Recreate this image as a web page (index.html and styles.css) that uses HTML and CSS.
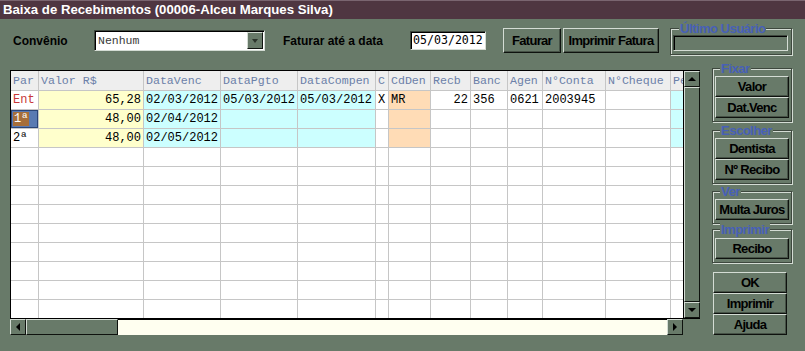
FILE: index.html
```html
<!DOCTYPE html>
<html lang="pt-BR">
<head>
  <meta charset="UTF-8">
  <title>Baixa de Recebimentos</title>
  <link rel="stylesheet" href="styles.css">
</head>
<body>
  <div class="titlebar">Baixa de Recebimentos (00006-Alceu Marques Silva)</div>

  <div class="toolbar">
    <span class="lbl lbl-conv">Convênio</span>
    <div class="combo">
      <span class="combo-text">Nenhum</span>
      <span class="combo-btn"><i class="tri tri-down"></i></span>
    </div>
    <span class="lbl lbl-data">Faturar até a data</span>
    <div class="field date">05/03/2012</div>
    <button class="btn btn-faturar">Faturar</button>
    <button class="btn btn-fatura">Imprimir Fatura</button>
    <div class="group group-user">
      <div class="group-title">Último Usuário</div>
      <div class="field user"></div>
    </div>
  </div>

  <div class="main">
    <div class="gridbox">
      <div class="sheet">
        <table>
          <colgroup>
            <col class="w-par"><col class="w-valor"><col class="w-data"><col class="w-data">
            <col class="w-comp"><col class="w-c"><col class="w-den"><col class="w-recb">
            <col class="w-banc"><col class="w-agen"><col class="w-conta"><col class="w-cheque"><col class="w-pe">
          </colgroup>
          <thead>
            <tr>
              <th>Par</th><th>Valor R$</th><th>DataVenc</th><th>DataPgto</th><th>DataCompen</th>
              <th>C</th><th>CdDen</th><th>Recb</th><th>Banc</th><th>Agen</th><th>N°Conta</th><th>N°Cheque</th><th>Pe</th>
            </tr>
          </thead>
          <tbody>
            <tr>
              <td class="red">Ent</td><td class="y num">65,28</td><td class="c">02/03/2012</td><td class="c">05/03/2012</td><td class="c">05/03/2012</td>
              <td>X</td><td class="p">MR</td><td class="num">22</td><td>356</td><td>0621</td><td>2003945</td><td></td><td class="c"></td>
            </tr>
            <tr>
              <td class="sel"><span class="mark">1ª</span></td><td class="y num">48,00</td><td class="c">02/04/2012</td><td class="c"></td><td class="c"></td>
              <td></td><td class="p"></td><td></td><td></td><td></td><td></td><td></td><td class="c"></td>
            </tr>
            <tr>
              <td>2ª</td><td class="y num">48,00</td><td class="c">02/05/2012</td><td class="c"></td><td class="c"></td>
              <td></td><td class="p"></td><td></td><td></td><td></td><td></td><td></td><td class="c"></td>
            </tr>
            <tr><td></td><td></td><td></td><td></td><td></td><td></td><td></td><td></td><td></td><td></td><td></td><td></td><td></td></tr>
            <tr><td></td><td></td><td></td><td></td><td></td><td></td><td></td><td></td><td></td><td></td><td></td><td></td><td></td></tr>
            <tr><td></td><td></td><td></td><td></td><td></td><td></td><td></td><td></td><td></td><td></td><td></td><td></td><td></td></tr>
            <tr><td></td><td></td><td></td><td></td><td></td><td></td><td></td><td></td><td></td><td></td><td></td><td></td><td></td></tr>
            <tr><td></td><td></td><td></td><td></td><td></td><td></td><td></td><td></td><td></td><td></td><td></td><td></td><td></td></tr>
            <tr><td></td><td></td><td></td><td></td><td></td><td></td><td></td><td></td><td></td><td></td><td></td><td></td><td></td></tr>
            <tr><td></td><td></td><td></td><td></td><td></td><td></td><td></td><td></td><td></td><td></td><td></td><td></td><td></td></tr>
            <tr><td></td><td></td><td></td><td></td><td></td><td></td><td></td><td></td><td></td><td></td><td></td><td></td><td></td></tr>
            <tr><td></td><td></td><td></td><td></td><td></td><td></td><td></td><td></td><td></td><td></td><td></td><td></td><td></td></tr>
          </tbody>
        </table>
      </div>
      <div class="vscroll">
        <span class="sb-arrow"><i class="tri tri-up"></i></span>
        <span class="sb-thumb"></span>
        <span class="sb-arrow"><i class="tri tri-down"></i></span>
      </div>
      <div class="hscroll">
        <span class="sb-arrow"><i class="tri tri-left"></i></span>
        <span class="sb-thumb h-thumb"></span>
        <span class="sb-track"></span>
        <span class="sb-arrow"><i class="tri tri-right"></i></span>
      </div>
      <div class="corner"></div>
    </div>

    <div class="side">
      <div class="group">
        <div class="group-title">Fixar</div>
        <button class="btn side-btn">Valor</button>
        <button class="btn side-btn">Dat.Venc</button>
      </div>
      <div class="group">
        <div class="group-title">Escolher</div>
        <button class="btn side-btn">Dentista</button>
        <button class="btn side-btn">Nº Recibo</button>
      </div>
      <div class="group">
        <div class="group-title">Ver</div>
        <button class="btn side-btn">Multa Juros</button>
      </div>
      <div class="group group-last">
        <div class="group-title">Imprimir</div>
        <button class="btn side-btn">Recibo</button>
      </div>
      <div class="actions">
        <button class="btn side-btn">OK</button>
        <button class="btn side-btn">Imprimir</button>
        <button class="btn side-btn">Ajuda</button>
      </div>
    </div>
  </div>
</body>
</html>
```

FILE: styles.css
```css
:root {
  --bg: #687a69;
  --hi: #d4dcd4;
  --lo: #3e483e;
}
* { box-sizing: border-box; }
body {
  margin: 0;
  width: 805px;
  height: 351px;
  overflow: hidden;
  background: var(--bg);
  font-family: "Liberation Sans", Arial, sans-serif;
  color: #000;
}

/* barra de titulo */
.titlebar {
  height: 19px;
  border-top: 1px solid #7a6570;
  background: #4f3641;
  color: #fff;
  font-weight: bold;
  font-size: 13.2px;
  line-height: 17px;
  padding-left: 3px;
  white-space: nowrap;
}

/* linha de cima */
.toolbar { display: flex; align-items: center; height: 43px; padding-left: 13px; }
.lbl { font-weight: bold; font-size: 12px; white-space: nowrap; }
.lbl-conv { width: 81px; }
.lbl-data { width: 127px; margin-left: 18px; }
.combo {
  display: flex;
  width: 171px;
  height: 21px;
  background: #fff;
  border: 1px solid;
  border-color: var(--lo) var(--hi) var(--hi) var(--lo);
  box-shadow: inset 1px 1px 0 #000;
}
.combo-text { flex: 1; padding: 3px 0 0 3px; font: 11.5px "Liberation Mono", monospace; color: #3a3a3a; }
.combo-btn {
  width: 16px;
  margin: 1px 1px 1px 0;
  display: flex; align-items: center; justify-content: center;
  background: var(--bg);
  border: 1px solid;
  border-color: var(--hi) #101410 #101410 var(--hi);
}
.field {
  border: 1px solid;
  border-color: var(--lo) var(--hi) var(--hi) var(--lo);
  box-shadow: inset 1px 1px 0 #000;
}
.date {
  width: 76px;
  height: 19px;
  background: #fff;
  font: 11.6px "DejaVu Sans Mono", monospace;
  line-height: 17px;
  padding-left: 2px;
  white-space: nowrap;
}
.btn {
  background: var(--bg);
  border: 1px solid;
  border-color: var(--hi) #0e120e #0e120e var(--hi);
  box-shadow: inset -1px -1px 0 #465246;
  font-family: "Liberation Sans", Arial, sans-serif;
  font-weight: bold;
  font-size: 13px;
  letter-spacing: -0.7px;
  color: #000;
  padding: 0;
  white-space: nowrap;
}
.btn-faturar { width: 58px; height: 25px; margin-left: 17px; }
.btn-fatura { width: 96px; height: 25px; margin-left: 2px; }

/* molduras de grupo */
.group {
  display: flex;
  flex-direction: column;
  margin-top: 7px;
  padding: 0 3px 3px 1px;
  border: 1px solid var(--lo);
  box-shadow: inset 1px 1px 0 var(--hi), 1px 1px 0 var(--hi);
}
.group-title {
  width: fit-content;
  margin: -7px 0 1px 6px;
  padding: 0 1px;
  background: var(--bg);
  font-weight: bold;
  font-size: 13px;
  letter-spacing: -0.5px;
  line-height: 13px;
  color: #4760b8;
  white-space: nowrap;
}
.group-user { width: 122px; margin: 9px 0 0 11px; padding: 0 3px 3px 2px; align-self: flex-start; }
.group-user .group-title { margin-bottom: 0; }
.user { height: 16px; }

/* area principal */
.main { display: flex; align-items: flex-start; }
.gridbox {
  display: grid;
  grid-template-columns: 673px 17px;
  grid-template-rows: 249px 16px;
  margin: 8px 0 0 10px;
}
.sheet {
  overflow: hidden;
  background: #fff;
  border: 1px solid #000;
  border-right: none;
}
.sheet table {
  border-collapse: separate;
  border-spacing: 0;
  table-layout: fixed;
  width: 690px;
  font: 12px "Liberation Mono", monospace;
}
.w-par { width: 28px; }
.w-valor { width: 105px; }
.w-data { width: 77px; }
.w-comp { width: 78px; }
.w-c { width: 13px; }
.w-den { width: 42px; }
.w-recb { width: 40px; }
.w-banc { width: 37px; }
.w-agen { width: 35px; }
.w-conta { width: 63px; }
.w-cheque { width: 65px; }
.w-pe { width: 30px; }
th, td {
  padding: 0 2px 0 2px;
  border-right: 1px solid #c6c6c6;
  border-bottom: 1px solid #c6c6c6;
  white-space: nowrap;
  overflow: hidden;
  text-align: left;
  line-height: 16px;
}
thead tr { height: 20px; }
tbody tr { height: 19px; }
th { background: #eeeeee; font-weight: normal; color: #6b80a8; font-size: 11.6px; }
td.num { text-align: right; }
td.y { background: #ffffcc; }
td.c { background: #ccffff; }
td.p { background: #ffdcb6; }
td.red { color: #c83838; }
td.sel { background: #5a7ab2; box-shadow: inset 0 0 0 1px #2b4577; padding-left: 2px; }
.mark { background: #a66e3a; color: #fff; padding: 0 1px; }

/* barras de rolagem */
.vscroll {
  display: flex;
  flex-direction: column;
  border-left: 1px solid #000;
  border-top: 1px solid #000;
  border-bottom: 1px solid #000;
}
.hscroll { display: flex; }
.sb-arrow {
  flex: 0 0 16px;
  height: 16px;
  display: flex; align-items: center; justify-content: center;
  background: var(--bg);
  border: 1px solid;
  border-color: var(--hi) #0e120e #0e120e var(--hi);
}
.sb-thumb {
  flex: 1;
  background: var(--bg);
  border: 1px solid;
  border-color: var(--hi) #0e120e #0e120e var(--hi);
}
.hscroll .sb-thumb { flex: 0 0 92px; }
.sb-track { flex: 1; background: #fffff0; border-top: 1px solid #000; }
.corner { background: var(--bg); }
.tri { display: block; width: 0; height: 0; border: 4px solid transparent; }
.tri-up { border-bottom-color: #000; border-top-width: 0; }
.tri-down { border-top-color: #000; border-bottom-width: 0; }
.tri-left { border-right-color: #000; border-left-width: 0; }
.tri-right { border-left-color: #000; border-right-width: 0; }
.combo-btn .tri-down { border-top-color: #2c342c; border-width: 4px 3px 0; }

/* painel lateral */
.side { width: 80px; margin-left: 12px; display: flex; flex-direction: column; }
.side .group:first-child { margin-top: 6px; }
.side .group:nth-child(2) { margin-top: 8px; }
.side .group-last { margin-top: 5px; }
.side .group-last .group-title { margin-bottom: 2px; }
.side-btn { width: 74px; height: 21px; margin-left: 1px; }
.actions { display: flex; flex-direction: column; margin-top: 9px; }
```
